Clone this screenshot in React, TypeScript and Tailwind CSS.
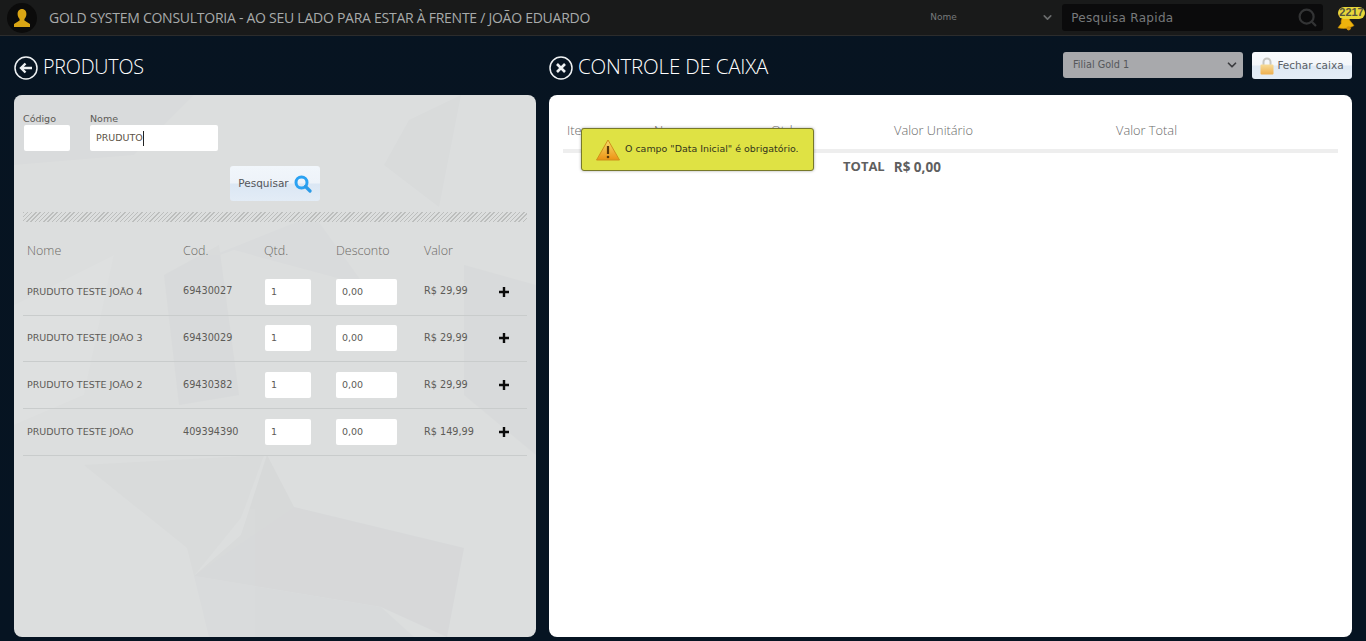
import { ChevronDown, Search } from "lucide-react";

const produtos = [
  { nome: "PRUDUTO TESTE JOÃO 4", cod: "69430027", valor: "R$ 29,99" },
  { nome: "PRUDUTO TESTE JOÃO 3", cod: "69430029", valor: "R$ 29,99" },
  { nome: "PRUDUTO TESTE JOÃO 2", cod: "69430382", valor: "R$ 29,99" },
  { nome: "PRUDUTO TESTE JOÃO", cod: "409394390", valor: "R$ 149,99" },
];

const small = "font-['DejaVu_Sans',sans-serif]";
const light = "font-['Open_Sans',sans-serif] font-light";
const rowCols = "grid grid-cols-[156px_81px_72px_88px_74px_1fr]";

function PanelTexture() {
  return (
    <svg className="absolute inset-0 h-full w-full opacity-45" viewBox="0 0 522 542" preserveAspectRatio="none">
      <polygon points="0,0 180,0 120,60 0,70" fill="#d6d8da" />
      <polygon points="447,0 425,112 370,70 395,25" fill="#d5d7d8" />
      <polygon points="150,180 300,120 350,190 220,155" fill="#d6d8da" />
      <polygon points="0,210 100,160 70,300 0,330" fill="#e1e3e3" />
      <polygon points="150,180 205,150 225,300 165,310" fill="#d5d7d8" />
      <polygon points="450,170 522,190 522,360 450,300" fill="#d5d7d8" />
      <polygon points="70,370 250,360 227,423 180,481 173,453" fill="#d6d8d8" />
      <polygon points="253,360 280,412 287,450 180,481 227,440" fill="#d2d4d4" />
      <polygon points="180,481 280,412 450,453 433,542 367,512" fill="#d1d2d5" />
      <polygon points="180,481 367,512 400,542 195,542" fill="#d5d7d9" />
    </svg>
  );
}

function BellBadge() {
  return (
    <div className="relative h-[30px] w-[30px]">
      <svg className="absolute left-px top-[13px]" width="18" height="15" viewBox="0 0 17 14">
        <path d="M7 .5c3-.8 4.500 1 5 3.500L16 9c-3.500 2.500-10 3.500-15 2l3-4C3.500 4.500 4.500 1.500 7 .5z" fill="#efb30c" stroke="#c98f06" strokeWidth="0.6" />
        <circle cx="11" cy="11.500" r="2" fill="#d4920a" />
      </svg>
      <span className="absolute left-[2px] top-[4px] flex h-[12px] w-[27px] items-center justify-center rounded-full bg-[#e8d63a] font-['Liberation_Sans',sans-serif] text-[11px] font-bold text-[#55553f]">
        2217
      </span>
    </div>
  );
}

export default function App() {
  return (
    <div className="flex h-[641px] w-[1366px] flex-col overflow-hidden bg-[linear-gradient(#071421,#061422)]">
      <header className="flex h-[36px] shrink-0 items-center border-b border-[#2c2c2c] bg-[#191a1a]">
        <div className="ml-[7px] flex h-[30px] w-[30px] items-center justify-center rounded-full bg-[#0b0b0b]">
          <svg width="18" height="20" viewBox="0 0 18 20">
            <path d="M9 1c3 0 4.400 2.400 4.400 5 0 2-.8 3.800-2 4.900v1.600L17 16v3H1v-3l5.600-3.500v-1.600C5.400 9.800 4.600 8 4.600 6c0-2.600 1.400-5 4.400-5z" fill="#d9a514" />
          </svg>
        </div>
        <div className="ml-[12px] w-[882px] text-[14px] tracking-[-0.26px] text-[#a8abab] font-['Open_Sans',sans-serif]">
          GOLD SYSTEM CONSULTORIA - AO SEU LADO PARA ESTAR À FRENTE / JOÃO EDUARDO
        </div>
        <div className={`flex w-[132px] items-center justify-between pr-[8px] text-[9px] text-[#77797a] ${small}`}>
          <span>Nome</span>
          <ChevronDown size={13} strokeWidth={3} className="text-[#6a6c6d]" />
        </div>
        <div className="flex h-[27px] w-[261px] items-center justify-between rounded-[3px] bg-[#0b0b0c] pl-[9px] pr-[5px]">
          <span className={`text-[12px] tracking-[0.3px] text-[#77797b] ${small}`}>Pesquisa Rapida</span>
          <Search size={21} strokeWidth={2.500} className="text-[#333435]" />
        </div>
        <div className="ml-[13px]">
          <BellBadge />
        </div>
      </header>

      <div className="flex min-h-0 flex-1 gap-[13px] px-[14px] pb-[4px]">
        <section className="flex w-[522px] flex-col">
          <div className="flex h-[59px] items-center gap-[5px] pt-[2px]">
            <svg width="24" height="24" viewBox="0 0 24 24" fill="none" stroke="#eef1f3" className="mt-[3px]">
              <circle cx="12" cy="12" r="11" strokeWidth="1.500" />
              <path d="M18 12H7M11.500 7.500 7 12l4.500 4.500" strokeWidth="2.400" />
            </svg>
            <h1 className={`text-[19.700px] tracking-[-0.2px] text-white ${light}`}>PRODUTOS</h1>
          </div>

          <div className="relative flex-1 overflow-hidden rounded-[8px] bg-[#dcdede]">
            <PanelTexture />
            <div className="relative px-[9px]">
              <div className="flex gap-[20px] pt-[17px]">
                <label className="flex flex-col">
                  <span className={`text-[9.500px] leading-[13px] text-[#5c5a56] ${small}`}>Código</span>
                  <div className="ml-px h-[26px] w-[46px] rounded-[2px] bg-white" />
                </label>
                <label className="flex flex-col">
                  <span className={`text-[9.500px] leading-[13px] text-[#5c5a56] ${small}`}>Nome</span>
                  <div className={`flex h-[26px] w-[128px] items-center rounded-[2px] bg-white pl-[6px] text-[9.500px] text-[#5c5346] ${small}`}>
                    PRUDUTO<span className="h-[15px] w-px bg-[#222]" />
                  </div>
                </label>
              </div>

              <div className="mt-[15px] flex pl-[207px]">
                <button className={`flex h-[35px] w-[90px] items-center justify-center gap-[5px] rounded-[3px] bg-[linear-gradient(#f1f6fb_0%,#eef3f9_48%,#dbe7f4_52%,#e3ecf6_100%)] text-[10.500px] text-[#55565a] ${small}`}>
                  Pesquisar
                  <svg width="18" height="18" viewBox="0 0 18 18" fill="none">
                    <circle cx="7.500" cy="7.500" r="5.500" stroke="#2ba2f2" strokeWidth="3" />
                    <path d="M11.500 11.500 16 16" stroke="#2b9be8" strokeWidth="3.200" strokeLinecap="round" />
                  </svg>
                </button>
              </div>

              <div className="mt-[11px] h-[10px] bg-[repeating-linear-gradient(135deg,#bcbebd_0px,#bcbebd_1px,#dcdede_1px,#dcdede_3px)]" />

              <div className={`${rowCols} mt-[20px] pl-[4px] text-[12.500px] text-[#6c6a66] ${light}`}>
                <span>Nome</span>
                <span>Cod.</span>
                <span>Qtd.</span>
                <span>Desconto</span>
                <span>Valor</span>
              </div>

              <div className="mt-[8px]">
                {produtos.map((p) => (
                  <div key={p.nome} className={`${rowCols} h-[46.800px] items-center border-b border-[#c9cccc] pl-[4px] text-[9.500px] text-[#5d5b57] ${small}`}>
                    <span>{p.nome}</span>
                    <span className="text-[9.700px]">{p.cod}</span>
                    <div className="flex h-[26px] w-[46px] translate-x-[1px] items-center rounded-[2px] bg-white pl-[6px]">1</div>
                    <div className="flex h-[26px] w-[61px] items-center rounded-[2px] bg-white pl-[6px]">0,00</div>
                    <span className="text-[9.700px]">{p.valor}</span>
                    <svg width="12" height="12" viewBox="0 0 12 12">
                      <path d="M6 1v10M1 6h10" stroke="#0b0b0b" strokeWidth="2.400" />
                    </svg>
                  </div>
                ))}
              </div>
            </div>
          </div>
        </section>

        <section className="flex w-[803px] flex-col">
          <div className="flex h-[59px] items-center pt-[2px]">
            <svg width="24" height="24" viewBox="0 0 24 24" fill="none" stroke="#eef1f3" className="mt-[3px]">
              <circle cx="12" cy="12" r="11" strokeWidth="1.500" />
              <path d="M8 8l8 8M16 8l-8 8" strokeWidth="2.600" />
            </svg>
            <h1 className={`ml-[5px] text-[20.500px] tracking-[-0.2px] text-white ${light}`}>CONTROLE DE CAIXA</h1>
            <div className="ml-auto mt-[14px] flex gap-[9px] self-start">
              <div className={`flex h-[26px] w-[180px] items-center justify-between rounded-[3px] bg-[#a8a9ac] pl-[10px] pr-[4px] text-[9.700px] text-[#55575a] ${small}`}>
                <span>Filial Gold 1</span>
                <ChevronDown size={14} strokeWidth={3} className="text-[#3c3d40]" />
              </div>
              <button className={`flex h-[27px] w-[100px] items-center justify-center gap-[3px] rounded-[3px] bg-[linear-gradient(#f8fafc_0%,#f3f6fa_48%,#dfe9f4_52%,#e4edf6_100%)] text-[10.500px] text-[#5a5f66] ${small}`}>
                <svg width="14" height="18" viewBox="0 0 14 18" fill="none">
                  <defs>
                    <linearGradient id="cadeado" x1="0" y1="0" x2="0" y2="1">
                      <stop offset="0" stopColor="#f7dc9a" />
                      <stop offset="1" stopColor="#eeb04f" />
                    </linearGradient>
                  </defs>
                  <path d="M3.500 8V5a3.500 3.500 0 0 1 7 0v3" stroke="#c6c6c2" strokeWidth="2" />
                  <rect x="0.500" y="7.500" width="13" height="10" rx="1" fill="url(#cadeado)" />
                </svg>
                Fechar caixa
              </button>
            </div>
          </div>

          <div className="relative flex-1 rounded-[8px] bg-white px-[14px] pt-[26px]">
            <div className={`grid h-[28px] grid-cols-[87px_117px_123px_222px_1fr] pl-[4px] text-[12.800px] text-[#6a6a6a] ${light}`}>
              <span>Item</span>
              <span>Nome</span>
              <span>Qtd.</span>
              <span>Valor Unitário</span>
              <span>Valor Total</span>
            </div>
            <div className="h-[4px] bg-[#eeeeee]" />
            <div className="mt-[4px] flex items-center gap-[9px] pl-[280px] font-bold text-[#5f5f5f] font-['Open_Sans',sans-serif]">
              <span className="text-[13px]">TOTAL</span>
              <span className="text-[13.500px]">R$ 0,00</span>
            </div>

            <div className={`absolute left-[32px] top-[33px] flex h-[43px] w-[233px] items-center rounded-[3px] border border-[#77792a] bg-[#dfe244] pl-[14px] text-[9.450px] text-[#33341c] shadow-[0_0_3px_rgba(0,0,0,0.35)] ${small}`}>
              <svg width="24" height="22" viewBox="0 0 24 22" className="mr-[5px]">
                <defs>
                  <linearGradient id="alerta" x1="0" y1="0" x2="0" y2="1">
                    <stop offset="0" stopColor="#f8dd6a" />
                    <stop offset="1" stopColor="#ec9214" />
                  </linearGradient>
                </defs>
                <path d="M12 1 23.500 21H.5z" fill="url(#alerta)" stroke="#d0901a" strokeLinejoin="round" />
                <path d="M12 7v8" stroke="#5b3a08" strokeWidth="2.200" />
                <circle cx="12" cy="18" r="1.300" fill="#5b3a08" />
              </svg>
              O campo "Data Inicial" é obrigatório.
            </div>
          </div>
        </section>
      </div>
    </div>
  );
}
